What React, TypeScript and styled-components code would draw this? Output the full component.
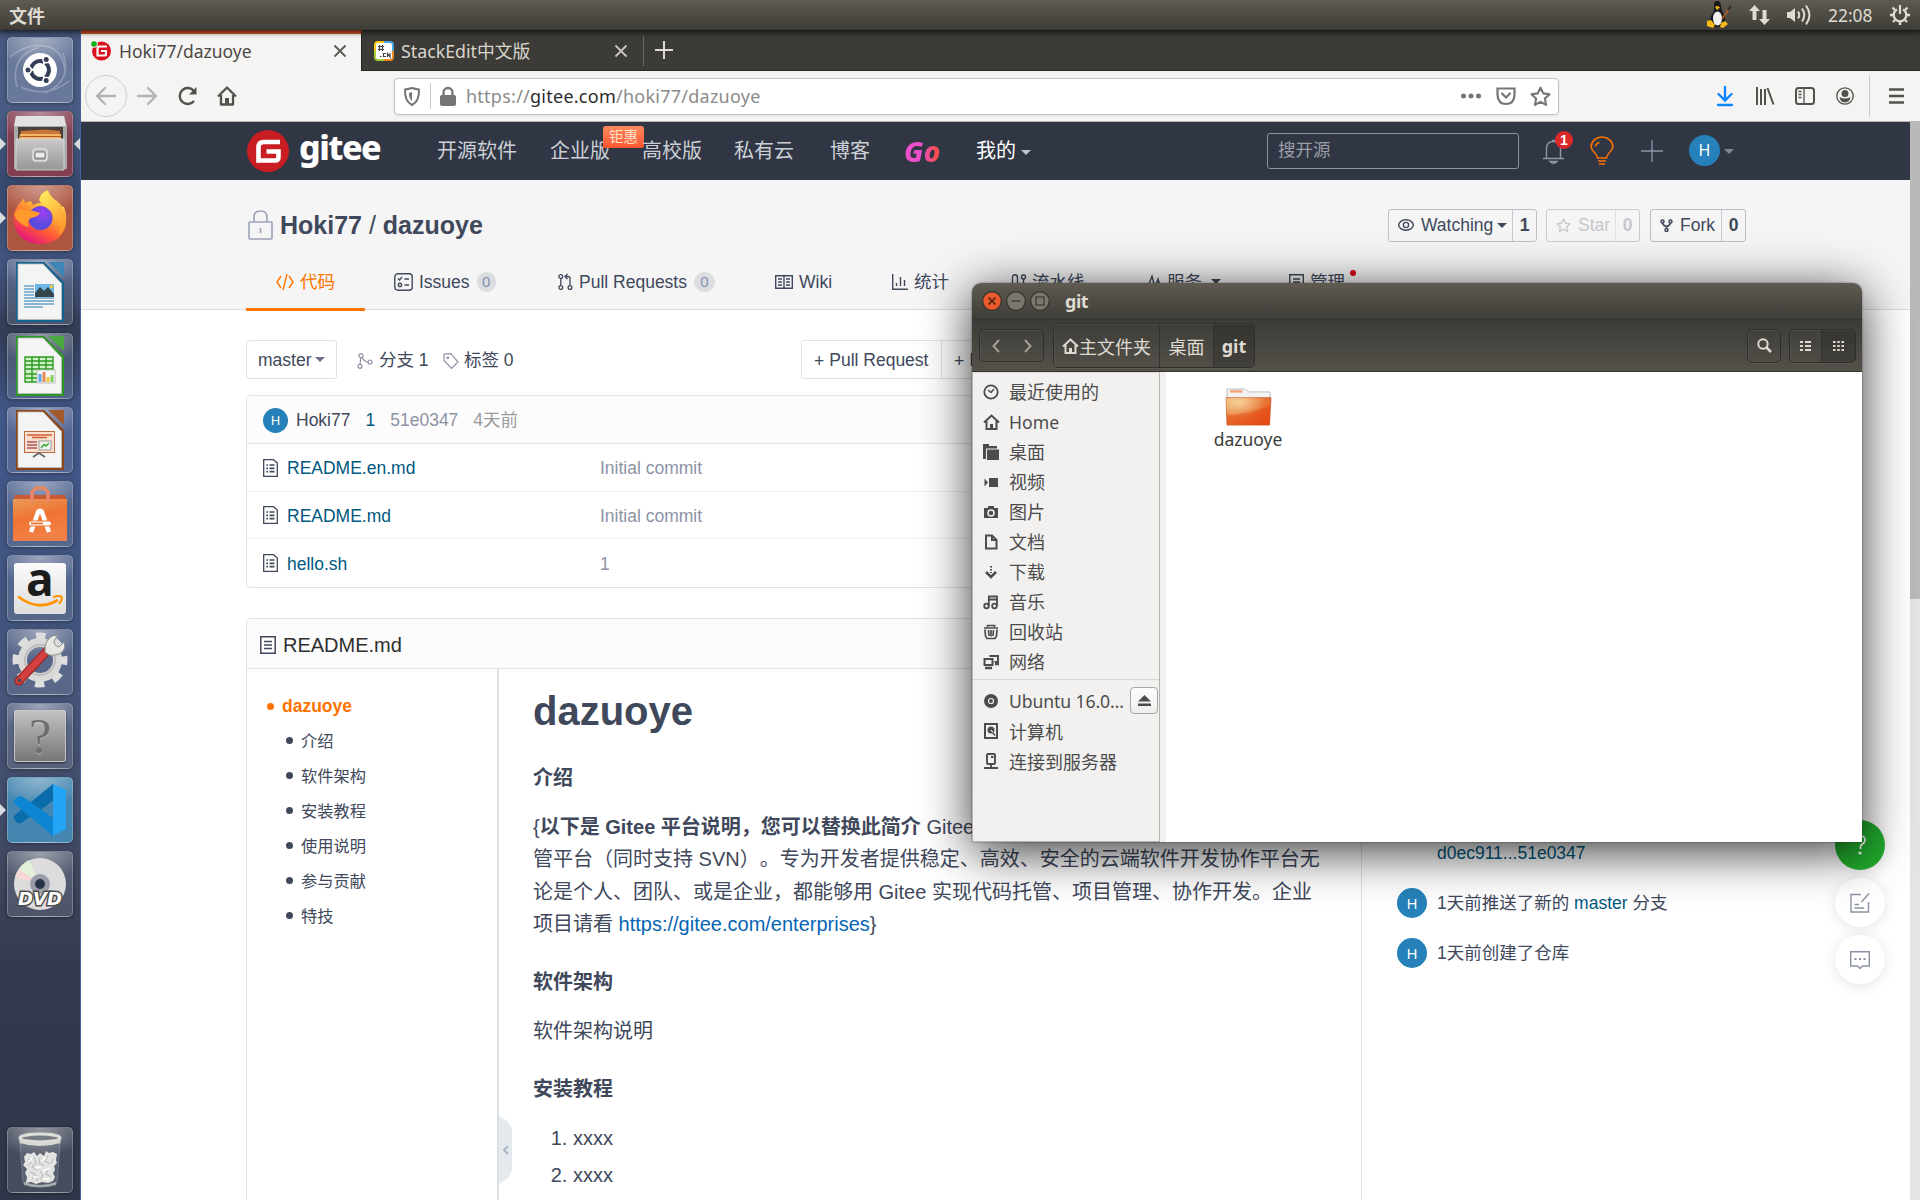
import React from "react";
import styled, { createGlobalStyle, css } from "styled-components";

const uiFont = `"Noto Sans", "Noto Sans CJK SC", sans-serif`;
const webFont = `"Liberation Sans", "Noto Sans CJK SC", sans-serif`;

const GlobalStyle = createGlobalStyle`
  *, *::before, *::after { box-sizing: border-box; }
  body { margin: 0; background: #fff; overflow: hidden; }
  svg { display: block; flex: none; overflow: visible; }
  h1, h4, p, ol, ul { margin: 0; padding: 0; font-weight: inherit; }
`;

/* ------------------------------------------------------------------ shell */

const Desktop = styled.div`
  position: relative;
  width: 1920px;
  height: 1200px;
  overflow: hidden;
  display: flex;
  flex-direction: column;
  font-family: ${uiFont};
`;

const TopPanel = styled.header`
  position: relative;
  z-index: 3;
  flex: none;
  height: 30px;
  display: flex;
  align-items: center;
  padding: 0 10px 0 9px;
  background: linear-gradient(#5f5b51, #56534a 25%, #3f3e39 96%, #33322e);
  box-shadow: 0 1px 6px 1px rgba(0, 0, 0, 0.75);
  color: #dfdbd2;
  font-size: 18px;
  line-height: 30px;
`;

const AppMenuTitle = styled.span`
  flex: 1;
  font-weight: 600;
  padding-top: 2px;
`;

const Indicators = styled.div`
  display: flex;
  align-items: center;
`;

const Clock = styled.span`
  width: 45px;
  margin: -1px 17px 0 15px;
  font-size: 17.4px;
  white-space: nowrap;
`;

const Workspace = styled.div`
  flex: 1;
  display: flex;
  min-height: 0;
`;

const LauncherBar = styled.nav`
  flex: none;
  width: 81px;
  display: flex;
  flex-direction: column;
  justify-content: space-between;
  padding: 7px 0 7px 7px;
  border-right: 1px solid #44639a;
  background: linear-gradient(
    #46587d 0,
    #4a5c83 7%,
    #37496e 13%,
    #42557f 20%,
    #3a4765 23.5%,
    #323d56 25.5%,
    #39496c 29%,
    #42578a 33%,
    #41557f 48%,
    #46557a 57%,
    #414962 70%,
    #343a4e 80%,
    #30374a 100%
  );
`;

const LauncherGroup = styled.div`
  display: flex;
  flex-direction: column;
  gap: 8px;
`;

const LauncherTile = styled.div<{ $tint?: string; $running?: boolean; $focused?: boolean }>`
  position: relative;
  width: 66px;
  height: 66px;
  border-radius: 5px;
  border: 1px solid rgba(255, 255, 255, 0.24);
  background: radial-gradient(ellipse 75% 45% at 50% 0, rgba(255, 255, 255, 0.42), rgba(255, 255, 255, 0) 100%),
    ${(p) => p.$tint || "rgba(255,255,255,0.11)"};
  box-shadow: 0 1px 4px rgba(0, 0, 0, 0.35);
  svg { margin: -1px; }
  ${(p) =>
    p.$running &&
    css`
      &::before {
        content: "";
        position: absolute;
        left: -8px;
        top: 26px;
        border: 6px solid transparent;
        border-left-color: #d8dbe0;
        border-right-width: 0;
      }
    `}
  ${(p) =>
    p.$focused &&
    css`
      &::after {
        content: "";
        position: absolute;
        left: 66px;
        top: 26px;
        border: 6px solid transparent;
        border-right-color: #d8dbe0;
        border-left-width: 0;
      }
    `}
`;

/* ---------------------------------------------------------------- browser */

const Browser = styled.main`
  flex: 1;
  min-width: 0;
  display: flex;
  flex-direction: column;
`;

const TabStrip = styled.div`
  flex: none;
  height: 41px;
  display: flex;
  background: #3c3b37;
  border-bottom: 1px solid #282623;
`;

const BrowserTab = styled.div<{ $active?: boolean }>`
  width: 281px;
  height: 41px;
  display: flex;
  align-items: center;
  padding: 0 ${(p) => (p.$active ? 15 : 16)}px 0 ${(p) => (p.$active ? 10 : 12)}px;
  font-size: ${(p) => (p.$active ? 17.5 : 17.8)}px;
  line-height: 24px;
  white-space: nowrap;
  background: ${(p) => (p.$active ? "#f5f4f2" : "transparent")};
  border-top: ${(p) => (p.$active ? "4px solid #d6552a" : "4px solid transparent")};
  border-right: ${(p) => (p.$active ? "1px solid #282623" : "0")};
  color: ${(p) => (p.$active ? "#4a4946" : "#d9d5cc")};
  svg { margin-top: -3px; }
  span { flex: 1; padding: 0 0 4px ${(p) => (p.$active ? 8 : 7)}px; }
`;

const NewTab = styled.div`
  display: flex;
  align-items: center;
  height: 30px;
  margin-top: 6px;
  padding-left: 11px;
  border-left: 1px solid #6b6963;
  svg { margin-top: -2px; }
`;

const NavBar = styled.div`
  flex: none;
  height: 51px;
  display: flex;
  align-items: center;
  padding: 0 15px 0 4px;
  background: #f5f4f2;
  border-bottom: 1px solid #b9b8b6;
`;

const BackButton = styled.div`
  width: 42px;
  height: 42px;
  border-radius: 50%;
  border: 1px solid #cfcecc;
  display: flex;
  align-items: center;
  justify-content: center;
`;

const NavIcons = styled.div<{ $left: number; $gap: number }>`
  display: flex;
  align-items: center;
  gap: ${(p) => p.$gap}px;
  margin-left: ${(p) => p.$left}px;
`;

const UrlBar = styled.div`
  width: 1165px;
  height: 37px;
  margin-left: 157px;
  display: flex;
  align-items: center;
  padding: 0 7px 0 9px;
  background: #fff;
  border: 1px solid #c3c2c0;
  border-radius: 4px;
  box-shadow: 0 1px 3px rgba(0, 0, 0, 0.08);
`;

const VDivider = styled.i<{ $h: number; $m: string }>`
  width: 1px;
  height: ${(p) => p.$h}px;
  margin: ${(p) => p.$m};
  background: #c8c7c5;
`;

const UrlText = styled.span`
  flex: 1;
  margin-left: 10px;
  color: #8b8b8a;
  font-size: 18px;
  line-height: 24px;
  letter-spacing: 0.25px;
  b { font-weight: 400; color: #2b2b2a; }
`;

const Viewport = styled.div`
  flex: 1;
  min-height: 0;
  display: flex;
`;

const Scrollbar = styled.div`
  width: 10px;
  background: #e4e4e4;
  &::before {
    content: "";
    display: block;
    height: 477px;
    background: #b9b9b9;
  }
`;

/* ------------------------------------------------------------------ gitee */

const Page = styled.div`
  position: relative;
  flex: 1;
  min-width: 0;
  overflow: hidden;
  background: #fff;
  color: #40485b;
  font-family: ${webFont};
  font-size: 17.5px;
`;

const SiteNav = styled.div`
  height: 58px;
  display: flex;
  align-items: center;
  padding-left: 166px;
  background: #303643;
`;

const Wordmark = styled.span`
  width: 82px;
  margin: -8px 56px 0 10px;
  color: #fff;
  font: 800 34px/44px "Noto Sans", sans-serif;
  letter-spacing: -1.5px;
`;

const SiteLink = styled.span<{ $left: number; $w: number; $bright?: boolean }>`
  position: relative;
  width: ${(p) => p.$w}px;
  margin-left: ${(p) => p.$left}px;
  font-size: 20px;
  line-height: 30px;
  white-space: nowrap;
  color: ${(p) => (p.$bright ? "#fff" : "#ccd0d6")};
`;

const PromoBadge = styled.span`
  position: absolute;
  left: 53px;
  top: -10px;
  width: 41px;
  height: 22px;
  border-radius: 3px 3px 3px 0;
  background: linear-gradient(#ff8a5c, #fc5530);
  color: #ffe2c8;
  font-size: 14.5px;
  line-height: 22px;
  text-align: center;
`;

const GoLogo = styled.span`
  width: 40px;
  margin-left: 34px;
  font: italic 800 28px/32px "Noto Sans", sans-serif;
  letter-spacing: 0.2px;
  color: transparent;
  background: linear-gradient(90deg, #e84fc8 45%, #fb4b52 80%);
  background-clip: text;
  -webkit-background-clip: text;
`;

const Caret = styled.i<{ $color: string; $left: number; $size?: number }>`
  display: inline-block;
  vertical-align: middle;
  margin-left: ${(p) => p.$left}px;
  border: ${(p) => p.$size || 5}px solid transparent;
  border-top-color: ${(p) => p.$color};
  border-bottom-width: 0;
`;

const SearchBox = styled.div`
  width: 252px;
  height: 36px;
  margin-left: 236px;
  padding-left: 10px;
  border: 1px solid #8d93a1;
  border-radius: 3px;
  color: #9a9ea6;
  font-size: 17.5px;
  line-height: 33px;
`;

const BellWrap = styled.div`
  position: relative;
  margin-left: 24px;
`;

const BellCount = styled.span`
  position: absolute;
  left: 12px;
  top: -7px;
  width: 18px;
  height: 18px;
  border-radius: 50%;
  background: #db2828;
  color: #fff;
  font-size: 14px;
  font-weight: 700;
  line-height: 18px;
  text-align: center;
`;

const Avatar = styled.span<{ $size: number; $m?: string }>`
  flex: none;
  width: ${(p) => p.$size}px;
  height: ${(p) => p.$size}px;
  margin: ${(p) => p.$m || "0"};
  border-radius: 50%;
  background: #2680b9;
  color: #fff;
  font: 400 ${(p) => Math.round(p.$size * 0.5)}px / ${(p) => p.$size}px "Noto Sans", sans-serif;
  text-align: center;
`;

const RepoHeader = styled.section`
  height: 130px;
  padding: 28px 164px 0 165px;
  background: #f5f5f5;
  border-bottom: 1px solid #dcdce0;
`;

const TitleRow = styled.div`
  display: flex;
  align-items: center;
  height: 34px;
  padding-left: 2px;
`;

const RepoTitle = styled.h1`
  flex: 1;
  padding: 0 0 1px 7px;
  font-size: 25px;
  font-weight: 700;
  line-height: 32px;
  span { font-weight: 400; }
`;

const CountButton = styled.div<{ $w: number; $left?: number; $muted?: boolean }>`
  width: ${(p) => p.$w}px;
  height: 33px;
  margin-left: ${(p) => p.$left || 0}px;
  display: flex;
  align-items: center;
  border: 1px solid ${(p) => (p.$muted ? "#c9ccd6" : "#babfcb")};
  border-radius: 3px;
  line-height: 31px;
  padding-left: 9px;
  color: ${(p) => (p.$muted ? "#c6c7ca" : "#40485b")};
  b {
    width: 24px;
    height: 31px;
    margin-left: auto;
    text-align: center;
    border-left: 1px solid ${(p) => (p.$muted ? "#dfe1e6" : "#c4c8d2")};
  }
  span { margin-left: 7px; white-space: nowrap; }
`;

const RepoTabs = styled.div`
  display: flex;
  height: 69px;
`;

const RepoTab = styled.div<{ $w: number; $left?: number; $active?: boolean }>`
  position: relative;
  flex: none;
  width: ${(p) => p.$w}px;
  height: 69px;
  margin-left: ${(p) => p.$left || 0}px;
  display: flex;
  align-items: center;
  justify-content: ${(p) => (p.$active ? "center" : "flex-start")};
  gap: 6px;
  padding-top: 13px;
  line-height: 20px;
  white-space: nowrap;
  color: ${(p) => (p.$active ? "#fe7300" : "#40485b")};
  border-bottom: 3px solid ${(p) => (p.$active ? "#fe7300" : "transparent")};
`;

const Pill = styled.em`
  width: 21px;
  height: 20px;
  margin-left: 1px;
  border-radius: 10px;
  background: #dcdddf;
  color: #8391b0;
  font: 400 15px/20px "Liberation Sans", sans-serif;
  text-align: center;
`;

const NoticeDot = styled.i`
  position: absolute;
  right: -10px;
  top: 28px;
  width: 6px;
  height: 6px;
  border-radius: 50%;
  background: #d9001b;
`;

const Content = styled.div`
  display: flex;
  padding-left: 165px;
`;

const MainColumn = styled.div`
  width: 1116px;
  padding-top: 30px;
`;

const BranchRow = styled.div`
  display: flex;
  align-items: center;
  height: 39px;
  line-height: 37px;
`;

const OutlineButton = styled.div<{ $w: number; $joined?: boolean }>`
  width: ${(p) => p.$w}px;
  height: 39px;
  margin-left: ${(p) => (p.$joined ? -1 : 0)}px;
  padding: 2px 0 0 12px;
  border: 1px solid #dce3e8;
  border-radius: ${(p) => (p.$joined ? "0" : "3px 0 0 3px")};
  display: flex;
  align-items: center;
  white-space: nowrap;
  i { font-style: normal; margin-right: 5px; padding-top: 2px; }
`;

const BranchSelect = styled(OutlineButton)`
  padding-left: 11px;
  border-radius: 3px;
`;

const RefLink = styled.span<{ $w: number; $left: number; $gap: number }>`
  display: flex;
  align-items: center;
  width: ${(p) => p.$w}px;
  margin-left: ${(p) => p.$left}px;
  gap: ${(p) => p.$gap}px;
  padding-top: 2px;
  white-space: nowrap;
`;

const Card = styled.section<{ $top: number }>`
  margin-top: ${(p) => p.$top}px;
  border: 1px solid #dce3e8;
  border-radius: 4px 4px 3px 3px;
`;

const CommitBar = styled.div`
  height: 48px;
  display: flex;
  align-items: center;
  padding: 1px 0 0 16px;
  border-bottom: 1px solid #dce3e8;
  background: #fcfcfc;
  color: #8c92a4;
  line-height: 24px;
`;

const CommitAuthor = styled.span`
  margin-left: 8px;
  color: #40485b;
`;

const CommitMeta = styled.span<{ $color: string }>`
  margin-left: 15px;
  color: ${(p) => p.$color};
`;

const FileRow = styled.div<{ $h: number; $last?: boolean }>`
  height: ${(p) => p.$h}px;
  display: flex;
  align-items: center;
  padding-left: 16px;
  border-bottom: ${(p) => (p.$last ? "0" : "1px solid #eff1f3")};
  color: #8c92a4;
  line-height: 24px;
`;

const FileName = styled.span`
  width: 322px;
  padding: 1px 0 0 9px;
  color: #005980;
`;

const FileMessage = styled.span`
  padding-top: 1px;
`;

const ReadmeHeader = styled.div`
  height: 50px;
  display: flex;
  align-items: center;
  padding: 2px 0 0 13px;
  border-bottom: 1px solid #dce3e8;
  background: #fcfcfc;
  color: #303030;
  font-size: 20px;
  line-height: 24px;
  span { margin-left: 7px; padding-top: 1px; }
`;

const ReadmeBody = styled.div`
  display: flex;
  height: 560px;
`;

const Toc = styled.ul`
  width: 250px;
  padding: 19px 0 0 16px;
  list-style: none;
`;

const TocItem = styled.li<{ $root?: boolean }>`
  display: flex;
  align-items: center;
  height: 35px;
  padding: ${(p) => (p.$root ? "1px 0 0 4px" : "0 0 0 23px")};
  gap: 8px;
  color: ${(p) => (p.$root ? "#fe7300" : "#40485b")};
  font-size: ${(p) => (p.$root ? 17.5 : 16.25)}px;
  font-weight: ${(p) => (p.$root ? 700 : 400)};
  line-height: 24px;
  &::before {
    content: "";
    width: 7px;
    height: 7px;
    border-radius: 50%;
    background: currentColor;
  }
`;

const Article = styled.article`
  position: relative;
  flex: 1;
  padding: 14px 0 0 34px;
  border-left: 2px solid #d9e0e6;
  font-size: 20px;
  line-height: 32.3px;
  white-space: nowrap;
  text-spacing-trim: space-all;
  h1 { font-size: 40px; font-weight: 700; line-height: 56px; }
  h4 { font-weight: 700; line-height: 28px; }
  a { color: #0565b5; }
`;

const Heading = styled.h4<{ $top: number }>`
  margin-top: ${(p) => p.$top}px;
`;

const Paragraph = styled.p<{ $top: number }>`
  margin-top: ${(p) => p.$top}px;
`;

const Steps = styled.ol`
  margin-top: 17px;
  padding-left: 40px;
  line-height: 36.7px;
`;

const TocHandle = styled.div`
  position: absolute;
  left: 0;
  top: 447px;
  width: 13px;
  height: 68px;
  display: flex;
  align-items: center;
  justify-content: center;
  background: #e3e9ed;
  clip-path: polygon(0 0, 70% 9%, 100% 20%, 100% 80%, 70% 91%, 0 100%);
`;

const SideColumn = styled.aside`
  padding: 501px 0 0 35px;
`;

const Activity = styled.div<{ $top?: number }>`
  display: flex;
  height: 32px;
  align-items: center;
  margin-top: ${(p) => p.$top || 0}px;
  line-height: 32px;
  white-space: nowrap;
  a { color: #005980; }
`;

const ActivityHash = styled.div`
  height: 18px;
  padding-left: 40px;
  line-height: 21px;
  color: #005980;
`;

const ActivityText = styled.span`
  margin-left: 10px;
`;

const FloatingTools = styled.div`
  position: absolute;
  left: 1754px;
  top: 698px;
  display: flex;
  flex-direction: column;
  gap: 8px;
`;

const RoundTool = styled.div<{ $green?: boolean }>`
  width: 50px;
  height: ${(p) => (p.$green ? 50 : 49)}px;
  border-radius: 50%;
  background: ${(p) => (p.$green ? "#21ab2d" : "#fff")};
  box-shadow: 0 2px 14px rgba(0, 0, 0, 0.11);
  display: flex;
  align-items: center;
  justify-content: center;
`;

/* ----------------------------------------------------------- file manager */

const FileWindow = styled.div`
  position: absolute;
  z-index: 2;
  left: 972px;
  top: 283px;
  width: 890px;
  height: 559px;
  display: flex;
  flex-direction: column;
  border-radius: 9px 9px 0 0;
  box-shadow: 0 9px 50px rgba(0, 0, 0, 0.8), 0 0 2px rgba(0, 0, 0, 0.5);
`;

const TitleBar = styled.div`
  flex: none;
  height: 36px;
  display: flex;
  align-items: center;
  padding-left: 10px;
  border-radius: 9px 9px 0 0;
  background: linear-gradient(#5f5b51, #3e3d38);
  color: #dfdbd2;
  font-size: 18px;
  font-weight: 700;
  line-height: 24px;
  gap: 4px;
  span { margin: -1px 0 0 11px; letter-spacing: -0.5px; }
`;

const ToolBar = styled.div`
  flex: none;
  height: 53px;
  display: flex;
  align-items: center;
  padding: 0 6px 0 7px;
  border-top: 1px solid #35342f;
  border-bottom: 1px solid #35342f;
  background: linear-gradient(#3c3b37, #54514a);
  color: #dfdbd2;
`;

const ToolGroup = styled.div<{ $w: number; $h: number; $left?: string }>`
  width: ${(p) => p.$w}px;
  height: ${(p) => p.$h}px;
  margin-left: ${(p) => p.$left || "0"};
  display: flex;
  border: 1px solid #2f2e2a;
  border-radius: 5px;
  box-shadow: inset 0 1px 0 rgba(255, 255, 255, 0.07), inset 1px 0 0 rgba(255, 255, 255, 0.05),
    0 1px 0 rgba(255, 255, 255, 0.06);
  overflow: hidden;
`;

const ToolCell = styled.div<{ $w: number; $pressed?: boolean; $divided?: boolean }>`
  flex: none;
  width: ${(p) => p.$w}px;
  display: flex;
  align-items: center;
  justify-content: center;
  font-size: 18px;
  font-weight: ${(p) => (p.$pressed ? 700 : 400)};
  white-space: nowrap;
  background: ${(p) => (p.$pressed ? "rgba(30,29,25,0.28)" : "transparent")};
  border-left: ${(p) => (p.$divided ? "1px solid #33322e" : "0")};
`;

const WindowBody = styled.div`
  flex: 1;
  display: flex;
  min-height: 0;
  background: #fff;
`;

const Places = styled.div`
  width: 188px;
  padding-top: 4px;
  background: #f2f1f0;
  border: 1px solid #b6b3ae;
  border-top-color: #dedcd9;
  color: #4c4c4c;
`;

const PaneHandle = styled.div`
  width: 6px;
  background: #f2f1f0;
`;

const Place = styled.div<{ $latin?: boolean }>`
  display: flex;
  align-items: center;
  height: 30.05px;
  padding-left: 10px;
  font-size: ${(p) => (p.$latin ? 17.6 : 18)}px;
  line-height: 24px;
  white-space: nowrap;
  svg { margin-top: -1px; }
  span { margin: ${(p) => (p.$latin ? "-1px" : "0")} 0 0 9px; }
`;

const DeviceName = styled.span`
  letter-spacing: -0.1px;
`;

const PlacesRule = styled.hr`
  height: 1px;
  margin: 2px 0 6px;
  border: 0;
  background: #d8d6d3;
`;

const EjectButton = styled.i`
  width: 28px;
  height: 27px;
  margin: -1px 1px 0 auto;
  display: flex;
  align-items: center;
  justify-content: center;
  border: 1px solid #a9a7a4;
  border-radius: 4px;
  background: linear-gradient(#fdfdfd, #efeeed);
`;

const FolderGrid = styled.div`
  flex: 1;
  padding: 16px 0 0 36px;
`;

const FolderItem = styled.div`
  width: 92px;
  display: flex;
  flex-direction: column;
  align-items: center;
  color: #3c3c3c;
  font-size: 17.5px;
  line-height: 25px;
`;

/* ------------------------------------------------------------------ icons */

type DocProps = { color: string; fold: string; children: React.ReactNode };

const OfficeDoc = ({ color, fold, children }: DocProps) => (
  <svg width="66" height="66" viewBox="0 0 66 66">
    <path d="M9 3H37L57 23V63H9Z" fill={color} />
    <path d="M11 5H36L54.500 24.500V60.500H11Z" fill="#f4f4f4" stroke="#bdbdbd" strokeWidth=".8" />
    <path d="M41 3H57V18Z" fill={fold} />
    {children}
  </svg>
);

const UbuntuIcon = () => (
  <svg width="66" height="66" viewBox="0 0 66 66" fill="none">
    <path d="M3 20Q20 6 38 9T58 34M10 50Q2 20 32 10M56 16Q66 44 38 56M62 44Q40 62 14 50" stroke="#fff" strokeOpacity=".26" strokeWidth="1.6" />
    <circle cx="33" cy="33" r="17" fill="#fff" />
    <circle cx="33" cy="33" r="9" stroke="#333d56" strokeWidth="4" strokeDasharray="16.3 2.55" strokeDashoffset="-1.3" transform="rotate(-60 33 33)" />
    <g fill="#333d56" stroke="#fff" strokeWidth="1.4">
      <circle cx="21" cy="33" r="3.2" />
      <circle cx="39.2" cy="22.6" r="3.2" />
      <circle cx="39.2" cy="43.6" r="3.2" />
    </g>
  </svg>
);

const CabinetIcon = () => (
  <svg width="66" height="66" viewBox="0 0 66 66">
    <defs>
      <linearGradient id="cab" x2="0" y2="1"><stop stopColor="#c9c9c9" /><stop offset="1" stopColor="#969696" /></linearGradient>
    </defs>
    <path d="M9 5H57L60 16V58H7V16Z" fill="#a9a9a9" />
    <path d="M9 5H57L59 15H7Z" fill="#e2e2e2" />
    <path d="M11 16H56V30H11Z" fill="#4a4038" />
    <path d="M14 20 39 18.5 53 20V28H13Z" fill="#c9763a" />
    <path d="M13 23H54V29H12Z" fill="#f0b765" />
    <path d="M13 25.5H54" stroke="#b55a2a" strokeWidth="1.2" />
    <path d="M9 28H57V59H9Z" fill="url(#cab)" stroke="#dedede" strokeWidth=".8" />
    <rect x="26" y="38" width="14" height="12" rx="3" fill="none" stroke="#e0e0e0" strokeWidth="1.6" />
    <rect x="28" y="41" width="10" height="6" rx="1.5" fill="#eee" stroke="#777" />
  </svg>
);

const FirefoxIcon = () => (
  <svg width="66" height="66" viewBox="0 0 66 66">
    <defs>
      <linearGradient id="fx" x1=".85" y1=".05" x2=".25" y2=".95"><stop stopColor="#fff44f" /><stop offset=".35" stopColor="#ffa436" /><stop offset=".65" stopColor="#ff5a36" /><stop offset="1" stopColor="#e5147e" /></linearGradient>
      <radialGradient id="fxg" cx=".6" cy=".3"><stop stopColor="#a03ff0" /><stop offset="1" stopColor="#5a4be0" /></radialGradient>
      <linearGradient id="fxt" x2=".6" y2="1"><stop stopColor="#fff261" /><stop offset="1" stopColor="#ff9a2e" /></linearGradient>
    </defs>
    <path d="M12 19 17 13.500 18 18Q21 16.500 24 16L26 20Q34 15 43 20L57 22Q61 34 58 43 52 59 33 59 12 58 7 39 5 27 12 19Z" fill="url(#fx)" />
    <circle cx="33.500" cy="33" r="12" fill="url(#fxg)" />
    <path d="M32 15Q34 7 41 5 43 12 50 16 60 24 59 38 57 46 52 50 55 34 46 27 38 23 32 15Z" fill="url(#fxt)" />
    <path d="M7 30Q10 22 18 25 26 25 33 28 31 32 24 33 19 36 22 42 12 40 7 30Z" fill="#ff9a2b" />
  </svg>
);

const WriterIcon = () => (
  <OfficeDoc color="#15618f" fold="#3d86b6">
    <path d="M17 27H27M17 30H27M17 33H27M17 36H27M17 39H47M17 42H47M17 45H47M17 48H36" stroke="#1c78b4" strokeWidth="1.2" />
    <rect x="28" y="25" width="19" height="13" fill="#6db7e8" />
    <path d="M28 34 33 28 37 32 41 28 47 35V38H28Z" fill="#33454a" />
    <circle cx="44.500" cy="27.500" r="1.700" fill="#f3c530" />
  </OfficeDoc>
);

const CalcIcon = () => (
  <OfficeDoc color="#2b9620" fold="#48a73f">
    <path d="M18 24H46V49H18Z" fill="#d3f0c8" />
    <path d="M18 24H46V49H18ZM18 28H46M18 32H46M18 36H46M18 41H46M18 45H46M25 24V49M32 24V49M39 24V49" fill="none" stroke="#2b9a22" strokeWidth="1.4" />
    <rect x="30" y="37" width="18" height="13" fill="#f7f7f7" stroke="#b5b5b5" strokeWidth=".8" />
    <path d="M31.500 41H34.500V49H31.500Z" fill="#5ba6e0" /><path d="M35.500 39H38.500V49H35.500Z" fill="#e98a58" /><path d="M39.500 44H42.500V49H39.500Z" fill="#f0c93c" /><path d="M43.500 42H46.500V49H43.500Z" fill="#83cf58" />
  </OfficeDoc>
);

const ImpressIcon = () => (
  <OfficeDoc color="#8d4518" fold="#a5592e">
    <rect x="17.500" y="24.500" width="30" height="21" fill="#f8dfd0" stroke="#bf6a42" />
    <path d="M20 28H45M25 30.500H40" stroke="#d55f31" strokeWidth="1.600" />
    <path d="M20 35H30M20 38H30M20 41H30" stroke="#a55" strokeWidth="1.300" />
    <rect x="32" y="34" width="12" height="9" fill="#f0f4ee" stroke="#999" />
    <path d="M34 41 37 37.500 39 39 42 36" fill="none" stroke="#42ab3a" strokeWidth="1.600" />
    <path d="M26 50 32 46 38 50" fill="none" stroke="#666" strokeWidth="1.800" />
  </OfficeDoc>
);

const SoftwareIcon = () => (
  <svg width="66" height="66" viewBox="0 0 66 66" fill="none">
    <defs><linearGradient id="bag" x2=".3" y2="1"><stop stopColor="#ea9a58" /><stop offset=".5" stopColor="#f07432" /><stop offset="1" stopColor="#f28046" /></linearGradient></defs>
    <path d="M8 14H58L60 22H6Z" fill="#c95a35" />
    <path d="M6 18H60V60H6Z" fill="url(#bag)" />
    <path d="M25 21V11L29 7H37L41 11V21" stroke="#e8876a" strokeWidth="3.600" />
    <path d="M24 51 31.500 30H34.500L42 51" stroke="#fff" strokeWidth="4.500" strokeLinejoin="bevel" />
    <path d="M22 42.500H44" stroke="#ef7433" strokeWidth="6" />
    <rect x="22" y="40.500" width="22" height="4" rx="2" fill="#fff" />
    <path d="M24 42.500H36" stroke="#ef7433" strokeWidth="1.800" />
  </svg>
);

const AmazonTile = styled.div`
  position: relative;
  width: 52px;
  height: 51px;
  margin: 7px 0 0 6px;
  border-radius: 3px;
  background: linear-gradient(#fafafa, #dedede);
  color: #1c1c1c;
  font: 700 46px/31px "Open Sans", sans-serif;
  text-align: center;
  svg { position: absolute; left: 4px; top: 32px; margin: 0; }
`;

const AmazonIcon = () => (
  <AmazonTile>
    a
    <svg width="46" height="14" fill="none" stroke="#ff9400" strokeWidth="2.800">
      <path d="M0 1.500Q20 17 40 5" />
      <path d="M35 2Q42 0 43.500 2T41 9" strokeWidth="2.200" />
    </svg>
  </AmazonTile>
);

const SettingsIcon = () => (
  <svg width="66" height="66" viewBox="0 0 66 66" fill="none">
    <circle cx="33" cy="31" r="17.500" stroke="#d9d9d9" strokeWidth="9" />
    <circle cx="33" cy="31" r="24" stroke="#dedede" strokeWidth="7" strokeDasharray="9.500 9.350" strokeDashoffset="4.700" />
    <circle cx="33" cy="31" r="15" stroke="#bcbcbc" strokeWidth="2" />
    <path d="M12 52 41 21" stroke="#9b2525" strokeWidth="9" strokeLinecap="round" />
    <path d="M12 52 40 22" stroke="#d43f3f" strokeWidth="6.500" strokeLinecap="round" />
    <path d="M38 23Q37 12 45 7L51 6 47 12Q47 17 52 18L57 13Q60 21 52 25 46 27 42 26Z" fill="#e6e6e2" stroke="#8c8c88" />
    <circle cx="12.500" cy="51.500" r="2" fill="#56454b" />
  </svg>
);

const UnknownTile = styled.div`
  width: 52px;
  height: 52px;
  margin: 6px 0 0 6px;
  border-radius: 2px;
  border: 1px solid #c9c9c9;
  background: linear-gradient(#c2c2c2, #777);
  box-shadow: 0 1px 2px rgba(0, 0, 0, 0.6);
  color: #6e6e6e;
  font: 400 50px/50px "Liberation Serif", serif;
  text-align: center;
  text-shadow: 0 1px 0 rgba(255, 255, 255, 0.35);
`;

const CodeIcon = () => (
  <svg width="66" height="66" viewBox="0 0 66 66">
    <path d="M46 7V24L14 46Q11 48 7 42Q6 40 8 38Z" fill="#0a6cab" />
    <path d="M7 23 12 19Q14 19 16 20L46 41V59L8 27Q6 25 7 23Z" fill="#0c86d3" />
    <path d="M46 7 59 13V52L46 59Z" fill="#24a4f4" />
  </svg>
);

const DvdLabel = styled.span`
  position: absolute;
  left: 5px;
  top: 34px;
  width: 54px;
  color: #fff;
  font: italic 700 18px/26px "DejaVu Sans", sans-serif;
  text-align: center;
  -webkit-text-stroke: 3px #4b4b49;
  paint-order: stroke fill;
`;

const DvdIcon = () => (
  <>
    <svg width="66" height="66" viewBox="0 0 66 66">
      <circle cx="33" cy="33" r="26" fill="#dcdcdc" />
      <path d="M33 33 12 18A26 26 0 0 1 22 9Z" fill="#e2f0d8" />
      <path d="M33 33 8 26A26 26 0 0 1 12 18Z" fill="#f5d7d7" />
      <path d="M33 33 50 53A26 26 0 0 1 38 58Z" fill="#f0d9e6" />
      <circle cx="33" cy="33" r="7.500" fill="#323b52" stroke="#9a9da8" strokeWidth="5" />
      <circle cx="33" cy="33" r="4.500" fill="#2b3347" />
    </svg>
    <DvdLabel>DVD</DvdLabel>
  </>
);

const TrashIcon = () => (
  <svg width="66" height="66" viewBox="0 0 66 66">
    <path d="M13 16H53L50 56Q33 62 16 56Z" fill="rgba(220,225,235,.13)" stroke="rgba(255,255,255,.2)" />
    <path d="M17 55Q33 61 49 55L49 58Q33 63 17 58Z" fill="#c3c9c4" fillOpacity=".7" />
    <path d="M17 30 20 26 24 27 27 25 30 29 33 26 37 29 39 24 42 26 46 25 50 27 49 33 50 36 47 39 48 43 46 46 48 50 46 54 41 56 35 55 29 57 24 55 19 56 20 50 18 46 20 42 16 38 18 35Z" fill="#e3e4e2" />
    <path d="M21 31 24 35 21 39M27 30 29 36 25 40 30 43M33 30 32 36 37 39M41 29 38 34 43 37M46 32 44 36M23 45 28 47 25 52M33 44 36 48 33 53M41 42 39 47 44 50M30 48 30 54" fill="none" stroke="#bcc0bc" strokeWidth="1.200" />
    <path d="M22 35 25 31M35 34 39 30M28 41 34 40M36 44 43 41M26 50 31 50M37 52 42 52" fill="none" stroke="#fff" strokeWidth="1.500" />
    <ellipse cx="33" cy="11" rx="20" ry="4" fill="#777b84" stroke="#deded9" strokeWidth="3" />
    <path d="M12.500 12Q33 19 53.500 12V16Q33 22 12.500 16Z" fill="#d9d9d3" />
  </svg>
);

const Tux = () => (
  <svg width="26" height="30" viewBox="0 0 26 30">
    <path d="M8 5Q8 1 11 1 15 1 15 6L16 11 19 16 19 24Q16 27 12 27H6L4 20 5 16 8 11Z" fill="#191919" />
    <ellipse cx="11.500" cy="18.500" rx="4.500" ry="7" fill="#efefef" />
    <path d="M9 7Q11.500 5 14 7.500L11 10Z" fill="#f2b21c" />
    <path d="M1 21 5 20 9 25 7 28 1 26ZM15 23 19 21 22 24 17 28 14 27Z" fill="#f8ba18" />
    <path d="M16 19 23 9" stroke="#a85d2f" strokeWidth="1.800" />
    <path d="M22 10 25 6" stroke="#3a3026" strokeWidth="2.200" />
  </svg>
);

const FileDocIcon = () => (
  <svg width="15" height="18" viewBox="0 0 15 18" fill="none" stroke="#40485b" strokeWidth="1.300">
    <path d="M.7.7H10.500L14.300 4V17.300H.7Z" />
    <path d="M3.300 6H5M3.300 9.300H5M3.300 12.600H5M6.500 6H11.500M6.500 9.300H11.500M6.500 12.600H11.500" strokeWidth="1.700" />
  </svg>
);

const CloseIcon = ({ color }: { color: string }) => (
  <svg width="12" height="12" fill="none" stroke={color} strokeWidth="1.800"><path d="M.5.500 11.500 11.500M11.500.500.500 11.500" /></svg>
);

const StarIcon = ({ size, color, width }: { size: number; color: string; width: number }) => (
  <svg width={size} height={size} viewBox="0 0 20 20" fill="none" stroke={color} strokeWidth={width} strokeLinejoin="round">
    <path d="M10 1.500 12.600 7 18.600 7.800 14.200 12 15.300 18 10 15.100 4.700 18 5.800 12 1.400 7.800 7.400 7Z" />
  </svg>
);

const WindowButton = ({ kind }: { kind: "close" | "min" | "max" }) => (
  <svg width="20" height="20" viewBox="0 0 20 20" fill="none">
    <circle cx="10" cy="10" r="9.300" fill={kind === "close" ? "#ea5a2e" : "#7a776f"} stroke="#33322d" strokeWidth="1.200" />
    {kind === "close" && <path d="M6.500 6.500 13.500 13.500M13.500 6.500 6.500 13.500" stroke="#4a2013" strokeWidth="1.600" />}
    {kind === "min" && <path d="M5.500 10H14.500" stroke="#45433d" strokeWidth="1.600" />}
    {kind === "max" && <rect x="6" y="6" width="8" height="8" stroke="#45433d" strokeWidth="1.500" />}
  </svg>
);

const FolderIcon = () => (
  <svg width="47" height="39" viewBox="0 0 48 40">
    <defs>
      <linearGradient id="fold" x2="1" y2="1"><stop stopColor="#e8a765" /><stop offset=".45" stopColor="#e8793a" /><stop offset="1" stopColor="#e84510" /></linearGradient>
      <radialGradient id="foldg" cx=".28" cy=".15" r=".6"><stop stopColor="#f6cf96" /><stop offset="1" stopColor="#f6cf96" stopOpacity="0" /></radialGradient>
    </defs>
    <path d="M2 1H20L24 4H46V14H2Z" fill="#f3f3f3" stroke="#bdbdbd" />
    <path d="M5 3.500H18" stroke="#f2a475" strokeWidth="2.500" />
    <path d="M1 10H47L45.500 38H2Z" fill="url(#fold)" stroke="#c9491b" strokeWidth=".8" />
    <path d="M1 10H47L45.500 38H2Z" fill="url(#foldg)" />
    <path d="M2 28Q28 26 46 18L45.500 37H2Z" fill="#e2420c" fillOpacity=".35" />
  </svg>
);

const HomeGlyph = ({ color }: { color: string }) => (
  <svg width="17" height="16" viewBox="0 0 17 16" fill="none" stroke={color} strokeWidth="2">
    <path d="M1 8.500 8.500 1.500 16 8.500M3.500 7V15H13.500V7" />
    <path d="M8.500 15V10" strokeWidth="3" />
  </svg>
);

const placeGlyphs: Record<string, React.ReactNode> = {
  recent: <g fill="none" strokeWidth="1.800"><circle cx="8" cy="8" r="6.700" /><path d="M5 6 8 8.500 11 5" strokeWidth="1.400" /></g>,
  desktop: <path d="M0 0H6V2H14V4.500H3V15H0ZM4 5.500H16V16H4Z" stroke="none" />,
  video: <path d="M6 4H15V13H6ZM1.500 4.500 5 8.500 1.500 12.500Z" stroke="none" />,
  photo: <g><path d="M1 4H5V2H11V4H15V14H1Z" stroke="none" /><circle cx="8" cy="9" r="3" stroke="#f2f1f0" strokeWidth="1.500" /></g>,
  doc: <path d="M3 1.500H9L13.500 6V14.500H3ZM9 1.500V6H13" fill="none" strokeWidth="2" />,
  down: <g fill="none" strokeWidth="2"><path d="M8 2V9" strokeDasharray="1.500 1.500" /><path d="M3 8 8 13 13 8" strokeWidth="2.500" /></g>,
  music: <g fill="none" strokeWidth="1.800"><circle cx="3.500" cy="12" r="2.300" /><circle cx="11.500" cy="12" r="2.300" /><path d="M5.800 12V2.500H14V12M5.800 5.500H14" /></g>,
  trash: <g fill="none" strokeWidth="1.700"><path d="M1 4H15M4.500 3V1.500H11.500V3M2 5.500 2.500 12 4 14.500H12L13.500 12 14 5.500M5.500 6 6 12M8 6V12.500M10.500 6 10 12" /></g>,
  net: <g fill="none" strokeWidth="2"><rect x="1.500" y="5" width="8" height="6" /><path d="M6.500 2H15V8H11.500" /><path d="M2 14H9M12 10H16" strokeWidth="2.500" /></g>,
  disc: <g><circle cx="8" cy="8" r="7" stroke="none" /><circle cx="8" cy="8" r="2.500" fill="none" stroke="#f2f1f0" strokeWidth="1.200" /></g>,
  disk: <g fill="none" strokeWidth="2"><rect x="2" y="1" width="12" height="14" /><circle cx="8" cy="7" r="3.500" fill="#4c4c4c" stroke="none" /><path d="M8 7 12 12" stroke="#f2f1f0" strokeWidth="1.200" /><path d="M9.500 9.500 12 12.500" strokeWidth="1.500" /></g>,
  server: <g fill="none" strokeWidth="1.900"><rect x="4" y="1" width="8" height="10" rx="1" /><path d="M8 4H10.500M8 11V14M1 15H15" /></g>,
};

const PlaceIcon = ({ name }: { name: string }) =>
  name === "home" ? (
    <HomeGlyph color="#4c4c4c" />
  ) : (
    <svg width="17" height="16" viewBox="0 0 17 16" fill="#4c4c4c" stroke="#4c4c4c">{placeGlyphs[name]}</svg>
  );

/* --------------------------------------------------------------- sections */

const Launcher = () => (
  <LauncherBar>
    <LauncherGroup>
      <LauncherTile $tint="rgba(190,200,225,0.28)"><UbuntuIcon /></LauncherTile>
      <LauncherTile $tint="#823f50" $running $focused><CabinetIcon /></LauncherTile>
      <LauncherTile $tint="#ad5540" $running><FirefoxIcon /></LauncherTile>
      <LauncherTile><WriterIcon /></LauncherTile>
      <LauncherTile><CalcIcon /></LauncherTile>
      <LauncherTile><ImpressIcon /></LauncherTile>
      <LauncherTile><SoftwareIcon /></LauncherTile>
      <LauncherTile><AmazonIcon /></LauncherTile>
      <LauncherTile><SettingsIcon /></LauncherTile>
      <LauncherTile><UnknownTile>?</UnknownTile></LauncherTile>
      <LauncherTile $tint="#4486b0" $running><CodeIcon /></LauncherTile>
      <LauncherTile><DvdIcon /></LauncherTile>
    </LauncherGroup>
    <LauncherTile><TrashIcon /></LauncherTile>
  </LauncherBar>
);

const GiteeG = ({ size, bg }: { size: number; bg: string }) => (
  <svg width={size} height={size} viewBox="0 0 42 42" fill="none">
    <circle cx="21" cy="21" r="21" fill={bg} />
    <path d="M33 12H17Q11.500 12 11.500 17V30.500H28Q31.500 30.500 31.500 27V21.500H19.500" stroke="#fff" strokeWidth="4.600" />
  </svg>
);

const BrowserChrome = () => (
  <>
    <TabStrip>
      <BrowserTab $active>
        <svg width="20" height="20" viewBox="0 0 20 20" fill="none">
          <circle cx="10.500" cy="10" r="9.500" fill="#d8131f" />
          <path d="M16 5.500H9Q6.500 5.500 6.500 8V14.500H13.500Q15 14.500 15 13V10H10" stroke="#fff" strokeWidth="2.200" />
          <circle cx="3" cy="3" r="3.800" fill="#f5f4f2" />
          <circle cx="3" cy="3" r="2.800" fill="#0bb21a" />
        </svg>
        <span>Hoki77/dazuoye</span>
        <CloseIcon color="#5a5956" />
      </BrowserTab>
      <BrowserTab>
        <svg width="20" height="20" viewBox="0 0 20 20" fill="none">
          <rect x="1" y="1" width="18" height="18" rx="3" fill="#fff" />
          <path d="M1 10V4Q1 1 4 1H10" stroke="#f5c518" strokeWidth="2" />
          <path d="M10 1H16Q19 1 19 4V10" stroke="#4aa3df" strokeWidth="2" />
          <path d="M19 10V16Q19 19 16 19H10" stroke="#f28c1e" strokeWidth="2" />
          <path d="M1 10V16Q1 19 4 19H10" stroke="#a4cf3a" strokeWidth="2" />
          <path d="M5.500 4V10M8.500 4V10M4 5.500H10M4 8.500H10M6 15.500H7.500M12 12.500H9.500V15.500H12M13.500 16V12.500L16 16V12" stroke="#444" strokeWidth="1.200" />
        </svg>
        <span>StackEdit中文版</span>
        <CloseIcon color="#c9c6be" />
      </BrowserTab>
      <NewTab>
        <svg width="18" height="18" stroke="#dedbd3" strokeWidth="2"><path d="M9 0V18M0 9H18" /></svg>
      </NewTab>
    </TabStrip>
    <NavBar>
      <BackButton>
        <svg width="20" height="18" fill="none" stroke="#b4b3b1" strokeWidth="2.300" strokeLinecap="round" strokeLinejoin="round"><path d="M9 1 1 9 9 17M2 9H19" /></svg>
      </BackButton>
      <NavIcons $left={10} $gap={20}>
        <svg width="20" height="18" fill="none" stroke="#b4b3b1" strokeWidth="2.300" strokeLinecap="round" strokeLinejoin="round"><path d="M11 1 19 9 11 17M18 9H1" /></svg>
        <svg width="20" height="20" fill="none" stroke="#52514e" strokeWidth="2.400"><path d="M17 15A8 8 0 1 1 17 5" /><path d="M19.500 1V8.500H12Z" fill="#52514e" stroke="none" /></svg>
        <svg width="20" height="20" fill="none" stroke="#52514e" strokeWidth="2.300" strokeLinejoin="round"><path d="M1 10.500 10 1.500 19 10.500M4 9V18.500H16V9" /><path d="M10 18V12" strokeWidth="4" /></svg>
      </NavIcons>
      <UrlBar>
        <svg width="16" height="19" fill="none" stroke="#757573" strokeWidth="2"><path d="M8 1Q11.500 2 15 2.500 15.500 14 8 18 .5 14 1 2.500 4.500 2 8 1Z" /><path d="M8 5V14Q5 12 5 6Z" fill="#757573" stroke="none" /></svg>
        <VDivider $h={26} $m="0 9px 0 10px" />
        <svg width="16" height="19" fill="#757573"><rect x="0" y="8" width="16" height="11" rx="2" /><path d="M3.500 8V5.500A4.500 4.500 0 0 1 12.500 5.500V8" fill="none" stroke="#757573" strokeWidth="2.300" /></svg>
        <UrlText>https://<b>gitee.com</b>/hoki77/dazuoye</UrlText>
        <NavIcons $left={0} $gap={14}>
          <svg width="21" height="6" fill="#757573"><circle cx="2.500" cy="3" r="2.500" /><circle cx="10" cy="3" r="2.500" /><circle cx="17.500" cy="3" r="2.500" /></svg>
          <svg width="20" height="18" fill="none" stroke="#757573" strokeWidth="2.200" strokeLinecap="round"><path d="M1.500 1.500H18.500V8Q18 17 10 17 2 17 1.500 8Z" /><path d="M6 6.500 10 10.500 14 6.500" /></svg>
          <StarIcon size={21} color="#757573" width={2} />
        </NavIcons>
      </UrlBar>
      <NavIcons $left={158} $gap={21}>
        <svg width="16" height="20" fill="none" stroke="#0a84ff" strokeWidth="2.300" strokeLinecap="round"><path d="M8 1V14M1.500 8 8 14.500 14.500 8M1 19H15" /></svg>
        <svg width="20" height="18" fill="none" stroke="#52514e" strokeWidth="2"><path d="M3 0V18M7 2V18M11 2V18M13.500 1 19.500 17.500" /></svg>
        <svg width="20" height="18" fill="none" stroke="#52514e" strokeWidth="2"><rect x="1" y="1" width="18" height="16" rx="2.500" /><path d="M9 1V17M3.500 4.500H6.500M3.500 7.500H6.500M3.500 10.500H6.500" strokeWidth="1.300" /></svg>
        <svg width="18" height="18" fill="#52514e"><circle cx="9" cy="9" r="8.200" fill="none" stroke="#52514e" strokeWidth="1.300" /><circle cx="9" cy="6.500" r="3.500" /><path d="M3.500 10Q9 13 14.500 10 14 15 9 15.500 4 15 3.500 10Z" /></svg>
      </NavIcons>
      <VDivider $h={42} $m="0 19px 0 15px" />
      <svg width="15" height="16" stroke="#52514e" strokeWidth="2.300"><path d="M0 1.500H15M0 8H15M0 14.500H15" /></svg>
    </NavBar>
  </>
);

const SiteHeader = () => (
  <SiteNav>
    <GiteeG size={42} bg="#c71d23" />
    <Wordmark>gitee</Wordmark>
    <SiteLink $left={0} $w={80}>开源软件</SiteLink>
    <SiteLink $left={33} $w={60}>企业版<PromoBadge>钜惠</PromoBadge></SiteLink>
    <SiteLink $left={32} $w={60}>高校版</SiteLink>
    <SiteLink $left={32} $w={60}>私有云</SiteLink>
    <SiteLink $left={36} $w={40}>博客</SiteLink>
    <GoLogo>Go</GoLogo>
    <SiteLink $left={32} $w={55} $bright>我的<Caret $color="#bfc3ca" $left={5} /></SiteLink>
    <SearchBox>搜开源</SearchBox>
    <BellWrap>
      <svg width="21" height="26" fill="none" stroke="#8f96a6" strokeWidth="1.400"><path d="M0 20.500H21M3.500 20V10Q4 3.500 10.500 3.500 17 3.500 17.500 10V20M9 2.500H12M7 23.500Q10.500 27 14 23.500Z" /></svg>
      <BellCount>1</BellCount>
    </BellWrap>
    <NavIcons $left={26} $gap={27}>
      <svg width="24" height="28" fill="none" stroke="#fe7300" strokeWidth="1.600"><path d="M7.500 21Q7 17.500 4 15 1 12 1.200 9.500A10.800 9.500 0 0 1 22.800 9.500Q23 12 20 15 17 17.500 16.500 21ZM8 24H16M9 27H15M5.500 9.500Q6 6 9.500 5.500" /></svg>
      <svg width="22" height="22" stroke="#8f96a6" strokeWidth="1.300"><path d="M11 0V22M0 11H22" /></svg>
    </NavIcons>
    <Avatar $size={31} $m="-1px 0 0 26px">H</Avatar>
    <Caret $color="#7f8694" $left={4} />
  </SiteNav>
);

const TabsRow = () => (
  <RepoTabs>
    <RepoTab $w={119} $active>
      <svg width="18" height="16" fill="none" stroke="#fe7300" strokeWidth="1.400"><path d="M5 2 1 8 5 14M13 2 17 8 13 14M11 0 7 16" /></svg>代码
    </RepoTab>
    <RepoTab $w={102} $left={29}>
      <svg width="19" height="18" fill="none" stroke="#40485b" strokeWidth="1.400"><rect x=".8" y=".8" width="17.400" height="16.400" rx="3" /><path d="M4 5.500 5.500 7 8 4M10.500 6H15M10.500 12H15" /><circle cx="6" cy="12" r="1.700" /></svg>
      Issues<Pill>0</Pill>
    </RepoTab>
    <RepoTab $w={157} $left={62}>
      <svg width="15" height="16" fill="none" stroke="#40485b" strokeWidth="1.300"><circle cx="2.800" cy="2.500" r="1.900" /><circle cx="2.800" cy="13.500" r="1.900" /><circle cx="12" cy="13.500" r="1.900" /><path d="M2.800 4.500V11.500M12 11.500V4.500Q12 2.500 10 2.500H7M9.500 0 7 2.500 9.500 5" /></svg>
      Pull Requests<Pill>0</Pill>
    </RepoTab>
    <RepoTab $w={56} $left={60}>
      <svg width="18" height="14" fill="none" stroke="#40485b" strokeWidth="1.400"><path d="M.7.700H17.300V13.300H.7ZM9 1V13M3 4H7M3 7H7M3 10H7M11 4H15M11 7H15M11 10H15" /></svg>
      Wiki
    </RepoTab>
    <RepoTab $w={57} $left={61}>
      <svg width="16" height="16" fill="none" stroke="#40485b" strokeWidth="1.400"><path d="M.7 0V15.300H16M4.500 12V9M8.500 12V3M12.500 12V6" /></svg>
      统计
    </RepoTab>
    <RepoTab $w={73} $left={61}>
      <svg width="16" height="16" fill="none" stroke="#40485b" strokeWidth="1.400"><circle cx="13.500" cy="3" r="2" /><circle cx="2.500" cy="13" r="2" /><path d="M2.500 11V4Q2.500 .7 5 .7T7.500 4V12Q8 15 10.500 15T13.500 12V5" /></svg>
      流水线
    </RepoTab>
    <RepoTab $w={75} $left={64}>
      <svg width="14" height="16" fill="none" stroke="#40485b" strokeWidth="1.400"><path d="M0 10H2L5 2 8 14 11 5 12.500 10H14" /></svg>
      服务<Caret $color="#40485b" $left={3} />
    </RepoTab>
    <RepoTab $w={57} $left={67}>
      <svg width="15" height="16" fill="none" stroke="#40485b" strokeWidth="1.400"><path d="M.7.700H14.300V15.300H.7ZM4 5H11M4 8H11M4 11H11" /></svg>
      管理<NoticeDot />
    </RepoTab>
  </RepoTabs>
);

const files: [string, string, number][] = [
  ["README.en.md", "Initial commit", 48],
  ["README.md", "Initial commit", 47],
  ["hello.sh", "1", 48],
];

const tocEntries = ["介绍", "软件架构", "安装教程", "使用说明", "参与贡献", "特技"];

const Repo = () => (
  <Page>
    <SiteHeader />
    <RepoHeader>
      <TitleRow>
        <svg width="25" height="30" fill="none" stroke="#9aa3b8" strokeWidth="1.600"><rect x="1" y="12" width="23" height="17" rx="1" /><path d="M6 12V7Q6 1 12.500 1T19 7V12M12.500 18V23" /></svg>
        <RepoTitle>Hoki77 <span>/</span> dazuoye</RepoTitle>
        <CountButton $w={149}>
          <svg width="16" height="12" fill="none" stroke="#40485b" strokeWidth="1.400"><ellipse cx="8" cy="6" rx="7.300" ry="5.200" /><circle cx="8" cy="6" r="2.600" /></svg>
          <span>Watching<Caret $color="#40485b" $left={4} /></span>
          <b>1</b>
        </CountButton>
        <CountButton $w={94} $left={9} $muted>
          <StarIcon size={15} color="#c6c7ca" width={1.700} />
          <span>Star</span>
          <b>0</b>
        </CountButton>
        <CountButton $w={96} $left={10}>
          <svg width="13" height="13" fill="none" stroke="#40485b" strokeWidth="1.500"><circle cx="2.500" cy="2.500" r="1.500" /><circle cx="10.500" cy="2.500" r="1.500" /><circle cx="6.500" cy="11" r="1.500" /><path d="M2.500 4Q3 6.500 6.500 7.500 10 6.500 10.500 4M6.500 7V9.500" /></svg>
          <span>Fork</span>
          <b>0</b>
        </CountButton>
      </TitleRow>
      <TabsRow />
    </RepoHeader>
    <Content>
      <MainColumn>
        <BranchRow>
          <BranchSelect $w={91}>master<Caret $color="#6b7385" $left={4} /></BranchSelect>
          <RefLink $left={20} $gap={6} $w={86}>
            <svg width="16" height="16" fill="none" stroke="#8c92a4" strokeWidth="1.200"><circle cx="4" cy="2.700" r="2" /><circle cx="3" cy="13.300" r="2" /><circle cx="13" cy="9" r="2" /><path d="M3.800 4.700 3 11.300M5 4.300Q7 8.500 11 9" /></svg>
            分支 1
          </RefLink>
          <RefLink $left={0} $gap={5} $w={358}>
            <svg width="16" height="16" fill="none" stroke="#8c92a4" strokeWidth="1.200"><path d="M1 1 8 .700 15 9 8.500 15.500 1 7.500Z" /><circle cx="4.800" cy="4.800" r=".8" /></svg>
            标签 0
          </RefLink>
          <OutlineButton $w={141}><i>+</i>Pull Request</OutlineButton>
          <OutlineButton $w={100} $joined><i>+</i>Issue</OutlineButton>
        </BranchRow>
        <Card $top={16}>
          <CommitBar>
            <Avatar $size={25}>H</Avatar>
            <CommitAuthor>Hoki77</CommitAuthor>
            <CommitMeta $color="#005980">1</CommitMeta>
            <CommitMeta $color="#8c92a4">51e0347</CommitMeta>
            <CommitMeta $color="#9b9b9b">4天前</CommitMeta>
          </CommitBar>
          {files.map(([name, message, height], i) => (
            <FileRow key={name} $h={height} $last={i === files.length - 1}>
              <FileDocIcon />
              <FileName>{name}</FileName>
              <FileMessage>{message}</FileMessage>
            </FileRow>
          ))}
        </Card>
        <Card $top={30}>
          <ReadmeHeader>
            <svg width="16" height="18" fill="none" stroke="#40485b" strokeWidth="1.500"><path d="M.8.800H15.200V17.200H.8ZM4 5.500H12M4 9H12M4 12.500H12" /></svg>
            <span>README.md</span>
          </ReadmeHeader>
          <ReadmeBody>
            <Toc>
              <TocItem $root>dazuoye</TocItem>
              {tocEntries.map((entry) => (
                <TocItem key={entry}>{entry}</TocItem>
              ))}
            </Toc>
            <Article>
              <h1>dazuoye</h1>
              <Heading $top={25}>介绍</Heading>
              <Paragraph $top={19}>
                {"{"}<b>以下是 Gitee 平台说明，您可以替换此简介</b> Gitee 是 OSCHINA 推出的基于 Git 的代码托
                <br />管平台（同时支持 SVN）。专为开发者提供稳定、高效、安全的云端软件开发协作平台无
                <br />论是个人、团队、或是企业，都能够用 Gitee 实现代码托管、项目管理、协作开发。企业
                <br />项目请看 <a>https://gitee.com/enterprises</a>{"}"}
              </Paragraph>
              <Heading $top={28}>软件架构</Heading>
              <Paragraph $top={19}>软件架构说明</Paragraph>
              <Heading $top={28}>安装教程</Heading>
              <Steps>
                <li>xxxx</li>
                <li>xxxx</li>
              </Steps>
              <TocHandle>
                <svg width="6" height="10" fill="none" stroke="#aab4c8" strokeWidth="1.800"><path d="M5 1 1 5 5 9" /></svg>
              </TocHandle>
            </Article>
          </ReadmeBody>
        </Card>
      </MainColumn>
      <SideColumn>
        <Activity><Avatar $size={30}>H</Avatar><ActivityText>1天前推送到了 <a>master</a> 分支</ActivityText></Activity>
        <ActivityHash>d0ec911...51e0347</ActivityHash>
        <Activity $top={26}><Avatar $size={30}>H</Avatar><ActivityText>1天前推送了新的 <a>master</a> 分支</ActivityText></Activity>
        <Activity $top={18}><Avatar $size={30}>H</Avatar><ActivityText>1天前创建了仓库</ActivityText></Activity>
      </SideColumn>
    </Content>
    <FloatingTools>
      <RoundTool $green>
        <svg width="12" height="20" fill="none" stroke="#fff" strokeWidth="1.700"><path d="M2 5Q2 1 6.500 1T11 5Q11 7.500 8.500 9T6.500 13V14" /><circle cx="6" cy="18" r=".7" fill="#fff" /></svg>
      </RoundTool>
      <RoundTool>
        <svg width="20" height="20" fill="none" stroke="#8c92a4" strokeWidth="1.400"><path d="M11 1.500H1V19H18.500V9M19 .500 11.500 9M4.500 11.500H9M4.500 15H14" /></svg>
      </RoundTool>
      <RoundTool>
        <svg width="20" height="18" fill="none" stroke="#8c92a4" strokeWidth="1.400"><path d="M.7.700H19.300V15H12.500L10 17.500 7.500 15H.7Z" /><path d="M4.500 8H6.500M9 8H11M13.500 8H15.500" strokeWidth="2" /></svg>
      </RoundTool>
    </FloatingTools>
  </Page>
);

const places: [string, string][] = [
  ["recent", "最近使用的"],
  ["home", "Home"],
  ["desktop", "桌面"],
  ["video", "视频"],
  ["photo", "图片"],
  ["doc", "文档"],
  ["down", "下载"],
  ["music", "音乐"],
  ["trash", "回收站"],
  ["net", "网络"],
];

const FileManager = () => (
  <FileWindow>
    <TitleBar>
      <WindowButton kind="close" />
      <WindowButton kind="min" />
      <WindowButton kind="max" />
      <span>git</span>
    </TitleBar>
    <ToolBar>
      <ToolGroup $w={65} $h={33}>
        <ToolCell $w={32}><svg width="8" height="14" fill="none" stroke="#a19e96" strokeWidth="2"><path d="M7 1 1.500 7 7 13" /></svg></ToolCell>
        <ToolCell $w={31}><svg width="8" height="14" fill="none" stroke="#a19e96" strokeWidth="2"><path d="M1 1 6.500 7 1 13" /></svg></ToolCell>
      </ToolGroup>
      <ToolGroup $w={202} $h={45} $left="9px">
        <ToolCell $w={105}><HomeGlyph color="#dfdbd2" />主文件夹</ToolCell>
        <ToolCell $w={54} $divided>桌面</ToolCell>
        <ToolCell $w={41} $divided $pressed>git</ToolCell>
      </ToolGroup>
      <ToolGroup $w={34} $h={34} $left="auto">
        <ToolCell $w={32}><svg width="15" height="15" fill="none" stroke="#dfdbd2" strokeWidth="2"><circle cx="6" cy="6" r="4.700" /><path d="M9.500 9.500 14 14" strokeWidth="2.500" /></svg></ToolCell>
      </ToolGroup>
      <ToolGroup $w={67} $h={34} $left="8px">
        <ToolCell $w={31}><svg width="11" height="10" stroke="#dfdbd2" strokeWidth="2"><path d="M0 1H3M5 1H11M0 5H3M5 5H11M0 9H3M5 9H11" /></svg></ToolCell>
        <ToolCell $w={34} $divided $pressed><svg width="11" height="10" stroke="#dfdbd2" strokeWidth="2"><path d="M0 1H11M0 5H11M0 9H11" strokeDasharray="2.500 1.750" /></svg></ToolCell>
      </ToolGroup>
    </ToolBar>
    <WindowBody>
      <Places>
        {places.map(([icon, label]) => (
          <Place key={icon} $latin={icon === "home"}><PlaceIcon name={icon} /><span>{label}</span></Place>
        ))}
        <PlacesRule />
        <Place $latin>
          <PlaceIcon name="disc" /><DeviceName>Ubuntu 16.0…</DeviceName>
          <EjectButton><svg width="13" height="11" fill="#4c4c4c"><path d="M6.500 0 13 6.500H0ZM0 8.500H13V11H0Z" /></svg></EjectButton>
        </Place>
        <Place><PlaceIcon name="disk" /><span>计算机</span></Place>
        <Place><PlaceIcon name="server" /><span>连接到服务器</span></Place>
      </Places>
      <PaneHandle />
      <FolderGrid>
        <FolderItem><FolderIcon />dazuoye</FolderItem>
      </FolderGrid>
    </WindowBody>
  </FileWindow>
);

export default function App() {
  return (
    <Desktop>
      <GlobalStyle />
      <TopPanel>
        <AppMenuTitle>文件</AppMenuTitle>
        <Indicators>
          <Tux />
          <NavIcons $left={17} $gap={17}>
            <svg width="21" height="20" fill="#dfdbd2"><path d="M5.500 0 11 6H7.500V15H3.500V6H0ZM15.500 20 10 14H13.500V5H17.500V14H21Z" /></svg>
            <svg width="26" height="20" fill="none" stroke="#dfdbd2" strokeWidth="2"><path d="M0 7H3L8 3V17L3 13H0Z" fill="#dfdbd2" stroke="none" /><path d="M11 6.500Q13.500 10 11 13.500M15 3.500Q19.500 10 15 16.500M19 .500Q26 10 19 19.500" /></svg>
          </NavIcons>
          <Clock>22:08</Clock>
          <svg width="20" height="20" viewBox="0 0 20 20" fill="none" stroke="#dfdbd2"><path d="M7 4.500A6.300 6.300 0 1 0 13 4.500" strokeWidth="2.200" /><path d="M10 0V9" strokeWidth="2.200" /><path d="M2.500 2.500 5 5M17.500 2.500 15 5M0 10H3M17 10H20M3 17 5 15M17 17 15 15M10 17V20" strokeWidth="2.400" /></svg>
        </Indicators>
      </TopPanel>
      <Workspace>
        <Launcher />
        <Browser>
          <BrowserChrome />
          <Viewport>
            <Repo />
            <Scrollbar />
          </Viewport>
        </Browser>
      </Workspace>
      <FileManager />
    </Desktop>
  );
}
